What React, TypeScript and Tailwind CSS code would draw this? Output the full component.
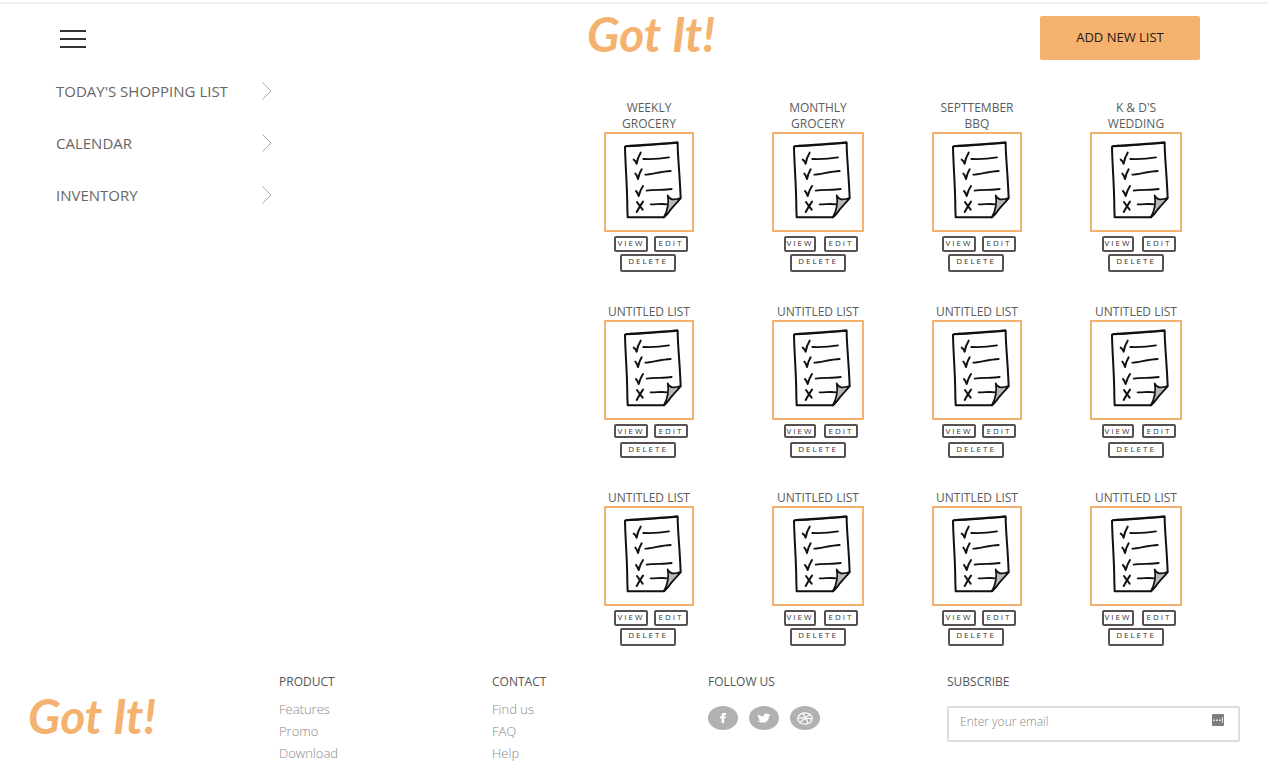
import React from "react";

type ListItem = { title: string[]; compact?: boolean };

const untitled = ["UNTITLED LIST"];

const lists: ListItem[] = [
  { title: ["WEEKLY", "GROCERY"] },
  { title: ["MONTHLY", "GROCERY"] },
  { title: ["SEPTTEMBER", "BBQ"] },
  { title: ["K & D'S", "WEDDING"] },
  ...Array.from({ length: 4 }, () => ({ title: untitled, compact: true })),
  ...Array.from({ length: 4 }, () => ({ title: untitled })),
];

function Logo() {
  return (
    <a
      href="#home"
      className="block whitespace-nowrap font-['Lato',sans-serif] text-[48px] leading-9 font-bold italic text-[#f4b26e]"
    >
      Got It!
    </a>
  );
}

function Checklist() {
  return (
    <svg
      viewBox="48 117 258 288"
      className="block h-full w-full"
      fill="none"
      stroke="#111"
      strokeLinecap="round"
      strokeLinejoin="round"
      aria-hidden="true"
    >
      <path strokeWidth="6" d="M105 155C107 153 112 152 118 152C166 149 217 147 262 142L263 147C263 182 269 235 272 309C267 316 252 330 243 342C236 352 230 360 222 367L113 367L112 340C112 275 106 213 105 155Z" />
      <path strokeWidth="4" d="M107 155C160 152 215 148 264 144" />
      <path strokeWidth="5" fill="#b9b9b9" d="M233 301C236 308 240 312 247 313C255 314 263 312 272 309C265 318 252 331 243 342C236 351 229 361 221 367C231 350 238 328 233 301Z" />
      <g strokeWidth="6">
        <path d="M131 194Q138 198 140 206Q143 187 152 173" />
        <path d="M136 236Q142 242 144 252Q147 236 155 223" />
        <path d="M138 288Q143 293 146 303Q150 287 159 273" />
        <path d="M141 321Q149 333 158 344M159 320Q150 333 140 351" />
      </g>
      <g strokeWidth="5.5">
        <path d="M160 192Q198 194 237 187" />
        <path d="M166 239C182 239 215 229 242 228" />
        <path d="M170 287C190 283 224 286 245 282" />
        <path d="M182 328C198 329 212 325 232 328" />
      </g>
    </svg>
  );
}

const smallButton =
  "flex items-center justify-center rounded-xs border-2 border-[#575152] text-[8px] leading-none tracking-[2px] text-[#333]";

function ListCard({ item, wide }: { item: ListItem; wide: boolean }) {
  const rowHeight = item.compact ? "h-[14px]" : "h-4 pb-[2px]";
  return (
    <article className={wide ? "w-[92px]" : "w-[90px]"}>
      <h2 className="text-center text-[12px] leading-4 whitespace-nowrap text-[#5c5c5c]">
        {item.title.map((line) => (
          <span key={line} className="block">
            {line}
          </span>
        ))}
      </h2>
      <div className="h-[100px] border-2 border-[#f4b26e]">
        <Checklist />
      </div>
      <div className={`mt-1 flex justify-between pr-[6px] ${wide ? "pl-3" : "pl-[10px]"}`}>
        <button type="button" className={`${smallButton} ${rowHeight} ${wide ? "w-8" : "w-[34px]"}`}>
          VIEW
        </button>
        <button type="button" className={`${smallButton} ${rowHeight} w-[34px]`}>
          EDIT
        </button>
      </div>
      <button
        type="button"
        className={`${smallButton} w-14 ${wide ? "ml-[18px]" : "ml-4"} ${item.compact ? "mt-1 h-4 pb-[2px]" : "mt-[2px] h-[18px] pb-1"}`}
      >
        DELETE
      </button>
    </article>
  );
}

function FooterLinks({ title, links }: { title: string; links: string[] }) {
  return (
    <section>
      <h3 className="text-[12px] leading-4 text-[#555]">{title}</h3>
      <ul className="mt-2">
        {links.map((link) => (
          <li key={link} className="text-[13px] leading-[22px] font-light text-[#888]">
            <a href={`#${link.toLowerCase().replace(" ", "-")}`}>{link}</a>
          </li>
        ))}
      </ul>
    </section>
  );
}

const social = "flex h-6 w-[30px] items-center justify-center rounded-[50%] bg-[#b1b1b1] text-white";

export default function App() {
  return (
    <div className="bg-white pt-[2px] font-['Open_Sans',sans-serif]">
      <header className="grid grid-cols-[527fr_453fr_160px] items-start border-t-2 border-[#eee] pt-3 pr-[68px] pl-[60px]">
        <button type="button" aria-label="Menu" className="mt-[14px] flex w-[26px] flex-col gap-[6px]">
          <span className="h-[2px] w-full bg-[#333]" />
          <span className="h-[2px] w-full bg-[#333]" />
          <span className="h-[2px] w-full bg-[#333]" />
        </button>
        <Logo />
        <button type="button" className="h-11 rounded-xs bg-[#f4b26e] text-[13px] text-[#1c1a18]">
          ADD NEW LIST
        </button>
      </header>

      <main className="grid grid-cols-[548fr_578fr] pr-[86px] pl-14">
        <nav className="flex w-[216px] flex-col gap-8 pt-[21px]">
          {["TODAY'S SHOPPING LIST", "CALENDAR", "INVENTORY"].map((label) => (
            <a
              key={label}
              href={`#${label.split(" ").pop()?.toLowerCase()}`}
              className="flex h-5 items-center justify-between text-[15px] leading-5 text-[#666]"
            >
              {label}
              <svg viewBox="0 0 10 18" className="h-[18px] w-[10px]" fill="none" stroke="#aaa" aria-hidden="true">
                <path d="M.5.5 9 9 .5 17.5" />
              </svg>
            </a>
          ))}
        </nav>
        <div className="grid grid-cols-[168fr_160fr_158fr_92fr] gap-y-8 pt-10">
          {lists.map((item, index) => (
            <ListCard key={index} item={item} wide={index % 2 === 1} />
          ))}
        </div>
      </main>

      <footer className="grid grid-cols-[251fr_213fr_216fr_239fr_293fr] px-7 pt-7">
        <div className="pt-6">
          <Logo />
        </div>
        <FooterLinks title="PRODUCT" links={["Features", "Promo", "Download"]} />
        <FooterLinks title="CONTACT" links={["Find us", "FAQ", "Help"]} />
        <section>
          <h3 className="text-[12px] leading-4 text-[#555]">FOLLOW US</h3>
          <div className="mt-4 flex gap-[11px]">
            <a href="#facebook" aria-label="Facebook" className={social}>
              <svg viewBox="0 0 12 12" className="h-3 w-3" fill="currentColor" aria-hidden="true">
                <path d="M4.6 11V6.3H3V4.4h1.6V3.3C4.6 1.7 5.5 1 7 1h2v1.9H7.9c-.6 0-.8.3-.8.8v.7H9l-.3 1.9H7.1V11Z" />
              </svg>
            </a>
            <a href="#twitter" aria-label="Twitter" className={social}>
              <svg viewBox="0 0 14 10" className="h-[10px] w-[14px]" fill="currentColor" aria-hidden="true">
                <path d="M.8 1.2C2.4 2.3 4 3.2 6.6 3.5 6.4 1.8 7.7.5 9.2.5c.8 0 1.5.3 2 .8l1.6-.6-.8 1.4 1.4-.2-1.5 1.5C11.9 7 9.5 9.5 6 9.5 4 9.5 2 9 .7 7.9c1.300.1 2.300-.2 3-.8C2.600 7 1.900 6.400 1.500 5.400h1C1.300 4.900.9 4 .8 1.200Z" />
              </svg>
            </a>
            <a href="#dribbble" aria-label="Dribbble" className={social}>
              <svg viewBox="0 0 16 13" className="h-[13px] w-4" fill="none" stroke="currentColor" strokeWidth="1.2" aria-hidden="true">
                <ellipse cx="8" cy="6.5" rx="7.2" ry="5.7" />
                <path d="M5.3 1.2C8 4 10 7.5 10.8 11.6M1 6C5.5 6.2 10 5.2 12.8 2.3M3.2 10.6C5.5 6.8 10.5 5.6 15 7" />
              </svg>
            </a>
          </div>
        </section>
        <section>
          <label htmlFor="email" className="block text-[12px] leading-4 text-[#555]">
            SUBSCRIBE
          </label>
          <div className="mt-4 flex h-9 items-start justify-between rounded-xs border-2 border-[#ddd] pt-[6px] pr-[14px] pl-[11px]">
            <input
              id="email"
              type="email"
              placeholder="Enter your email"
              className="min-w-0 flex-1 text-[12px] leading-4 font-light text-[#555] outline-none placeholder:text-[#888]"
            />
            <svg viewBox="0 0 12 12" className="h-3 w-3" aria-hidden="true">
              <rect width="12" height="12" rx="1" fill="#7d7d7d" />
              <path d="M1 5.5h2v1.5H1zM4 5.5h2v1.5H4zM7 5.5h2v1.5H7zM10 3h1v6h-1z" fill="#e3e3e3" />
            </svg>
          </div>
        </section>
      </footer>
    </div>
  );
}
